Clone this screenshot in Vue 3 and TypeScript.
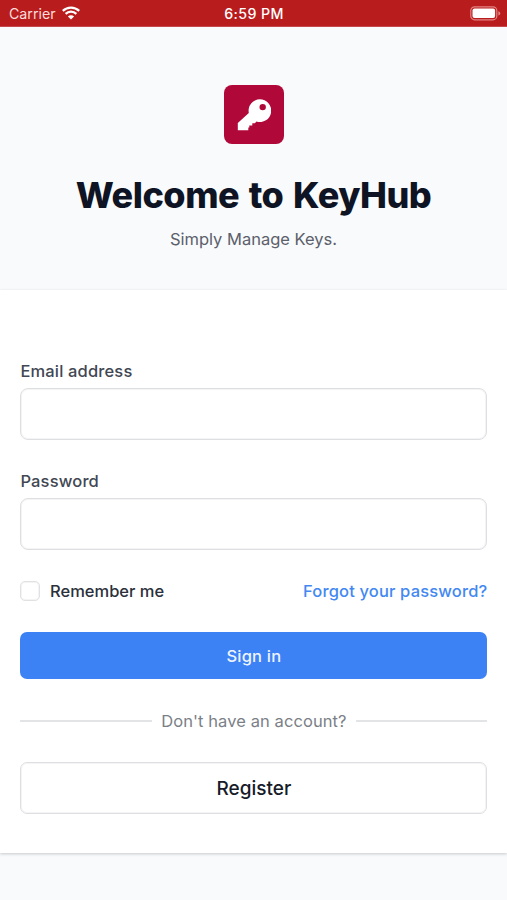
<script setup lang="ts">
import { ref } from 'vue'

const email = ref('')
const password = ref('')
const remember = ref(false)
</script>

<template>
  <div class="screen">
    <header class="status">
      <div class="carrier">
        <span class="carrier-name">Carrier</span>
        <svg class="wifi" viewBox="0 0 18 14" aria-hidden="true">
          <path d="M.8 4.9C5.4.4 12.6.4 17.2 4.9M3.6 7.9c3.1-3 7.7-3 10.8 0" fill="none" stroke="#fff" stroke-width="2.2" />
          <path d="M9 13.6 5.9 10.5c1.8-1.6 4.4-1.6 6.2 0z" fill="#fff" />
        </svg>
      </div>
      <span class="time">6:59 PM</span>
      <svg class="battery" viewBox="0 0 31 15" aria-hidden="true">
        <rect x=".8" y=".8" width="26" height="13" rx="3.8" fill="none" stroke="#e38383" stroke-width="1.2" />
        <rect x="2.5" y="2.5" width="22.6" height="9.6" rx="2" fill="#fff" />
        <path d="M28.3 5.2q2 .6 2 2.2t-2 2.2z" fill="#e38383" />
      </svg>
    </header>

    <section class="hero">
      <div class="logo">
        <svg viewBox="0 0 34 32" aria-hidden="true">
          <path fill="#fff" fill-rule="evenodd" d="M22.8.3a11.4 11.4 0 1 1-3.3 22.3l-1.7 1.6h-2.5v2.2h-3v2.2h-1v2.6H.8v-7.1l11-10.2A11.4 11.4 0 0 1 22.8.3zm2.9 4.6a3.2 3.2 0 1 0 0 6.4 3.2 3.2 0 0 0 0-6.4z" />
        </svg>
      </div>
      <h1>Welcome to KeyHub</h1>
      <p>Simply Manage Keys.</p>
    </section>

    <form class="card" @submit.prevent>
      <div class="field">
        <label for="email">Email address</label>
        <input id="email" v-model="email" type="email" />
      </div>
      <div class="field">
        <label for="password">Password</label>
        <input id="password" v-model="password" type="password" />
      </div>
      <div class="options">
        <label class="remember"><input v-model="remember" type="checkbox" /><span>Remember me</span></label>
        <a href="#"><span>Forgot your password?</span></a>
      </div>
      <button class="primary" type="submit"><span>Sign in</span></button>
      <div class="divider"><span>Don't have an account?</span></div>
      <button class="secondary" type="button"><span>Register</span></button>
    </form>
  </div>
</template>

<style>
body {
  background: #f9fafc;
}
</style>

<style scoped>
.screen,
.screen * {
  box-sizing: border-box;
}
.screen {
  min-height: 900px;
  background: #f9fafc;
  font-family: Inter, "Liberation Sans", sans-serif;
  color: #161e2e;
}
.status {
  height: 27px;
  padding: 0 6px 0 9px;
  display: grid;
  grid-template-columns: 1fr auto 1fr;
  align-items: center;
  background: #b91c1c;
  border-bottom: 1px solid #c74a4a;
  color: #fff;
}
.carrier {
  display: flex;
  align-items: center;
  gap: 6px;
  font-size: 14.2px;
  color: #fbdcdc;
}
.wifi {
  width: 18px;
  height: 14px;
}
.time {
  margin-right: 2px;
  font-size: 14.2px;
  font-weight: 500;
  letter-spacing: 0.4px;
}
.battery {
  width: 31px;
  height: 15px;
  justify-self: end;
}
.hero {
  height: 263px;
  padding-top: 58px;
  display: flex;
  flex-direction: column;
  align-items: center;
}
.logo {
  width: 60px;
  height: 59px;
  border-radius: 8px;
  background: #b00838;
  display: flex;
  align-items: center;
  justify-content: center;
}
.logo svg {
  width: 34px;
  height: 32px;
}
h1 {
  margin: 28px 0 0;
  font-size: 36px;
  line-height: 46px;
  font-weight: 800;
  letter-spacing: -0.5px;
  word-spacing: 2.2px;
  color: #0e1424;
  white-space: nowrap;
}
p {
  margin: 9px 0 0;
  font-size: 16.5px;
  line-height: 24px;
  color: #5b606b;
}
.card {
  height: 563px;
  padding: 69px 19.6px 0 20.4px;
  background: #fff;
  box-shadow: 0 1px 3px rgba(0, 0, 0, 0.2);
}
.field {
  height: 110px;
}
.field label {
  display: block;
  height: 29px;
  line-height: 24px;
  font-size: 16.5px;
  font-weight: 500;
  letter-spacing: 0.16px;
  color: #414753;
}
.field input {
  display: block;
  width: 100%;
  height: 52px;
  padding: 0 16px;
  border: 1px solid #dedfe2;
  border-radius: 8px;
  box-shadow: inset 0 0 0 1px #f4f4f5;
  font: inherit;
  outline: none;
}
.options {
  height: 24px;
  display: flex;
  justify-content: space-between;
  align-items: center;
  font-size: 16.5px;
  font-weight: 500;
}
.remember {
  display: flex;
  align-items: center;
  gap: 9.6px;
  color: #2b303b;
}
.remember input {
  appearance: none;
  width: 20px;
  height: 20px;
  margin: 0;
  border: 1px solid #dfe1e3;
  border-radius: 5px;
  box-shadow: inset 0 0 0 1px #f4f4f5;
  background: #fff;
}
.options a {
  color: #4388f2;
  letter-spacing: 0.16px;
  text-decoration: none;
}
button {
  display: block;
  width: 100%;
  padding: 0;
  font-family: inherit;
  font-weight: 500;
  border-radius: 7px;
}
.primary {
  height: 47px;
  margin-top: 29px;
  border: 0;
  background: #3c82f5;
  color: #eef4ff;
  font-size: 16.5px;
  letter-spacing: 0.2px;
}
.divider {
  height: 24px;
  margin-top: 29.5px;
  display: flex;
  align-items: center;
  gap: 9px;
  font-size: 16.5px;
  letter-spacing: 0.08px;
  color: #7b7f87;
}
.divider::before,
.divider::after {
  content: "";
  flex: 1;
  height: 2px;
  background: #e2e4e6;
}
.secondary {
  height: 52px;
  margin-top: 29.5px;
  border: 1px solid #dedfe2;
  box-shadow: inset 0 0 0 1px #f4f4f5;
  background: #fff;
  color: #161b27;
  font-size: 19px;
}
</style>
